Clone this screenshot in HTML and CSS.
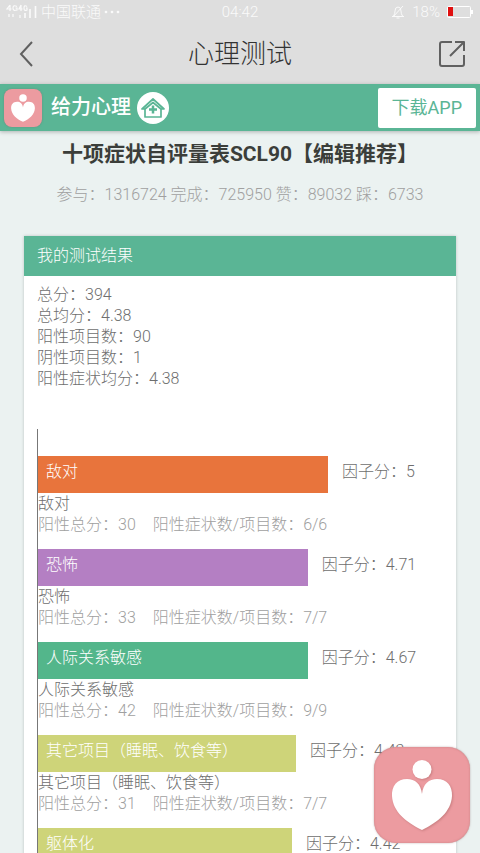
FILE: index.html
```html
<!DOCTYPE html>
<html lang="zh-CN">
<head>
<meta charset="utf-8">
<meta name="viewport" content="width=device-width, initial-scale=1">
<title>心理测试</title>
<link rel="stylesheet" href="styles.css">
</head>
<body>
<svg class="defs" aria-hidden="true">
  <symbol id="heart-logo" viewBox="0 0 96 96">
    <circle cx="48" cy="22.500" r="9.500"/>
    <path d="M48 47C47 37 41 32 33 32C23 32 17.500 39 18 49C19 65 32 75 48 83C64 75 77 65 78 49C78.500 39 73 32 63 32C55 32 49 37 48 47Z"/>
  </symbol>
</svg>
<div class="app">
  <div class="status">
    <div class="status-left">
      <svg class="signal" width="32" height="16" viewBox="0 0 32 16" aria-hidden="true">
        <g fill="none" stroke="currentColor" stroke-width="1.200">
          <path d="M4 1L1 5H5.500M4 1V7M11 2.500Q7 .5 7 4T11 6V4H9.500M15 1L13 5H16.500M15 1V7M21 2.500Q18 .5 18 4T21 6V4H20"/>
          <path d="M3 10V13M7 10V13M14 11V14"/>
          <path d="M19 9V14M24 5V14M29.500 2V14" stroke-width="1.600"/>
        </g>
      </svg>
      <span>中国联通</span>
      <svg width="16" height="4" viewBox="0 0 16 4" fill="currentColor" aria-hidden="true"><circle cx="2" cy="2" r="1.300"/><circle cx="8" cy="2" r="1.300"/><circle cx="14" cy="2" r="1.300"/></svg>
    </div>
    <span class="clock">04:42</span>
    <div class="status-right">
      <svg width="14" height="14" viewBox="0 0 14 14" fill="none" stroke="currentColor" aria-hidden="true"><path d="M1 11.500H13M2.500 11Q4 9 4 6Q4 2 7 2T10 6Q10 9 11.500 11M5.500 13H8.500M12 1L2 12"/></svg>
      <span>18%</span>
      <svg width="27" height="12" viewBox="0 0 27 12" aria-hidden="true"><rect x=".5" y=".5" width="23" height="11" rx="1" fill="none" stroke="#fff"/><path d="M24 4H26V8H24" fill="#fff"/><path fill="#e01010" d="M1 1H6V10H1Z"/></svg>
    </div>
  </div>
  <header class="nav">
    <button class="icon-button back" type="button" aria-label="返回">
      <svg width="16" height="28" viewBox="0 0 16 28" fill="none" stroke="currentColor" stroke-width="2"><path d="M14 2L3 14L14 26"/></svg>
    </button>
    <h1>心理测试</h1>
    <button class="icon-button" type="button" aria-label="分享">
      <svg width="28" height="28" viewBox="0 0 28 28" fill="none" stroke="currentColor" stroke-width="2" stroke-linejoin="round"><path d="M14 2H4Q2 2 2 4V24Q2 26 4 26H24Q26 26 26 24V15"/><path d="M12 16L26 2M17 2H26V11"/></svg>
    </button>
  </header>
  <div class="brand">
    <svg class="brand-logo" aria-hidden="true"><use href="#heart-logo"/></svg>
    <span class="brand-name">给力心理</span>
    <a class="home" href="#" aria-label="首页">
      <svg width="32" height="32" viewBox="0 0 32 32" aria-hidden="true"><circle cx="16" cy="16" r="16" fill="#fff"/><g fill="none" stroke="#5ab595" stroke-width="1.700" stroke-linejoin="round"><path d="M8 17H5L16 7L27 17H24V25H8V17L16 10.500L24 17"/><path d="M16 13.500V21.500M12 17.500H20" stroke-width="2.500"/></g></svg>
    </a>
    <a class="download" href="#">下载APP</a>
  </div>
  <main>
    <h2>十项症状自评量表SCL90【编辑推荐】</h2>
    <p class="stats">参与：1316724 完成：725950 赞：89032 踩：6733</p>
    <section class="card">
      <h3>我的测试结果</h3>
      <div class="result">
        <ul class="summary">
          <li>总分：394</li>
          <li>总均分：4.38</li>
          <li>阳性项目数：90</li>
          <li>阴性项目数：1</li>
          <li>阳性症状均分：4.38</li>
        </ul>
        <div class="chart">
          <article>
            <div class="row"><div class="bar orange" style="width:71.6%">敌对</div><span>因子分：5</span></div>
            <p>敌对</p>
            <p class="detail"><span>阳性总分：30</span><span>阳性症状数/项目数：6/6</span></p>
          </article>
          <article>
            <div class="row"><div class="bar purple" style="width:66.6%">恐怖</div><span>因子分：4.71</span></div>
            <p>恐怖</p>
            <p class="detail"><span>阳性总分：33</span><span>阳性症状数/项目数：7/7</span></p>
          </article>
          <article>
            <div class="row"><div class="bar green" style="width:66.6%">人际关系敏感</div><span>因子分：4.67</span></div>
            <p>人际关系敏感</p>
            <p class="detail"><span>阳性总分：42</span><span>阳性症状数/项目数：9/9</span></p>
          </article>
          <article>
            <div class="row"><div class="bar lime" style="width:63.7%">其它项目（睡眠、饮食等）</div><span>因子分：4.43</span></div>
            <p>其它项目（睡眠、饮食等）</p>
            <p class="detail"><span>阳性总分：31</span><span>阳性症状数/项目数：7/7</span></p>
          </article>
          <article>
            <div class="row"><div class="bar lime" style="width:62.7%">躯体化</div><span>因子分：4.42</span></div>
            <p>躯体化</p>
          </article>
        </div>
      </div>
    </section>
  </main>
  <button class="float-button" type="button" aria-label="给力心理"><svg aria-hidden="true"><use href="#heart-logo"/></svg></button>
</div>
</body>
</html>
```
FILE: styles.css
```css
* { box-sizing: border-box; }
body, h1, h2, h3, p, ul { margin: 0; padding: 0; }
body {
  font: 300 16px/21px Roboto, "Noto Sans CJK SC", sans-serif;
  color: #6e6e6e;
  background: #ebf2f1;
}
ul { list-style: none; }
button { border: 0; padding: 0; background: none; color: inherit; }
a { text-decoration: none; }
svg { display: block; flex: none; }
.defs { position: absolute; width: 0; height: 0; }
.app { height: 100vh; display: flex; flex-direction: column; }
.status, .nav, .brand { flex: none; }

.status {
  display: grid;
  grid-template-columns: 1fr auto 1fr;
  align-items: center;
  height: 24px;
  padding: 0 6px;
  background: #dedede;
  color: #fafafa;
  font-size: 15px;
}
.status-left, .status-right { display: flex; align-items: center; gap: 3px; }
.status-right { justify-content: flex-end; gap: 7px; }

.nav {
  display: flex;
  align-items: center;
  justify-content: space-between;
  height: 60px;
  padding: 0 14px;
  background: #dedede;
  color: #606060;
}
.nav h1 { font-size: 26px; line-height: 36px; font-weight: 300; color: #333; }
.icon-button { display: flex; width: 28px; }
.back { padding-left: 4px; }

.brand {
  display: flex;
  align-items: center;
  height: 47px;
  padding: 0 4px;
  background: #5ab595;
  box-shadow: 0 1px 4px #0004;
  z-index: 1;
}
.brand-logo { width: 38px; height: 38px; border-radius: 8px; background: #ec9ba0; fill: #fff; box-shadow: 0 0 2px #7668; }
.brand-name { margin: 0 6px 0 9px; font-size: 20px; font-weight: 500; color: #fff; }
.download {
  margin-left: auto;
  padding: 0 14px;
  border-radius: 2px;
  background: #fff;
  color: #5ab595;
  font-size: 18px;
  font-weight: 400;
  line-height: 40px;
}

main { flex: 1; min-height: 0; overflow-y: auto; scrollbar-width: none; padding: 9px 24px 0; }
h2 { font-size: 21px; line-height: 28px; font-weight: 700; text-align: center; color: #3b3e3a; white-space: nowrap; }
.stats { margin: 16px 0 31px; text-align: center; color: #a0a0a0; white-space: nowrap; }
.card { background: #fff; box-shadow: 0 0 3px #0003; }
.card h3 { padding: 0 13px; background: #5ab595; color: #fff; font-size: 16px; line-height: 40px; font-weight: 300; }
.result { padding: 8px 13px; }
.chart { margin-top: 40px; padding-top: 27px; border-left: 1px solid #777; white-space: nowrap; }
.chart article { height: 93px; }
.row { display: flex; align-items: center; gap: 14px; line-height: 32px; }
.bar { flex: none; height: 37px; padding-left: 8px; color: #fff; }
.row span { height: 37px; }
.orange { background: #e8743c; }
.purple { background: #b47fc3; }
.green { background: #53b68b; }
.lime { background: #ced479; }
.detail { display: flex; gap: 17px; color: #a0a0a0; }

.float-button {
  position: fixed;
  right: 10px;
  bottom: 10px;
  z-index: 2;
  width: 96px;
  height: 96px;
  border-radius: 22px;
  background: #ec9ba0;
  fill: #fff;
  box-shadow: inset 0 0 2px #a668, 0 0 2px #8668;
}
.float-button svg { width: 96px; height: 96px; filter: drop-shadow(1px 1px 1px #a668); }
```
